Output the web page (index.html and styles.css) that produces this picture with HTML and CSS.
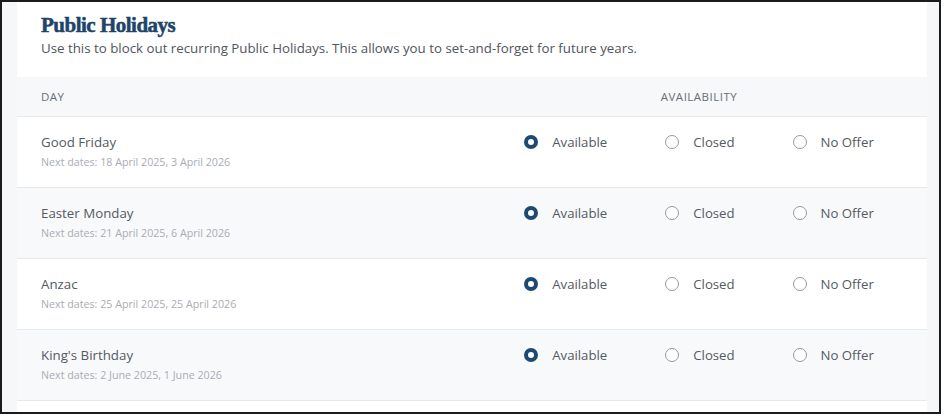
FILE: index.html
```html
<!DOCTYPE html>
<html lang="en">
<head>
<meta charset="utf-8">
<title>Public Holidays</title>
<link rel="stylesheet" href="styles.css">
</head>
<body>
<div class="frame">
  <section class="card">
    <header class="card-head">
      <h1 class="title">Public Holidays</h1>
      <p class="subtitle">Use this to block out recurring Public Holidays. This allows you to set-and-forget for future years.</p>
    </header>
    <div class="table">
      <div class="thead">
        <div class="th">Day</div>
        <div class="th th-avail">Availability</div>
      </div>

      <div class="row">
        <div class="day">
          <div class="day-name">Good Friday</div>
          <div class="day-dates">Next dates: 18 April 2025, 3 April 2026</div>
        </div>
        <div class="options">
          <label class="opt"><span class="radio checked"></span>Available</label>
          <label class="opt"><span class="radio"></span>Closed</label>
          <label class="opt"><span class="radio"></span>No Offer</label>
        </div>
      </div>

      <div class="row alt">
        <div class="day">
          <div class="day-name">Easter Monday</div>
          <div class="day-dates">Next dates: 21 April 2025, 6 April 2026</div>
        </div>
        <div class="options">
          <label class="opt"><span class="radio checked"></span>Available</label>
          <label class="opt"><span class="radio"></span>Closed</label>
          <label class="opt"><span class="radio"></span>No Offer</label>
        </div>
      </div>

      <div class="row">
        <div class="day">
          <div class="day-name">Anzac</div>
          <div class="day-dates">Next dates: 25 April 2025, 25 April 2026</div>
        </div>
        <div class="options">
          <label class="opt"><span class="radio checked"></span>Available</label>
          <label class="opt"><span class="radio"></span>Closed</label>
          <label class="opt"><span class="radio"></span>No Offer</label>
        </div>
      </div>

      <div class="row alt">
        <div class="day">
          <div class="day-name">King's Birthday</div>
          <div class="day-dates">Next dates: 2 June 2025, 1 June 2026</div>
        </div>
        <div class="options">
          <label class="opt"><span class="radio checked"></span>Available</label>
          <label class="opt"><span class="radio"></span>Closed</label>
          <label class="opt"><span class="radio"></span>No Offer</label>
        </div>
      </div>
    </div>
  </section>
</div>
</body>
</html>
```

FILE: styles.css
```css
* { box-sizing: border-box; }

html, body {
  margin: 0;
  padding: 0;
  background: #ffffff;
}

body {
  font-family: "Open Sans", "Liberation Sans", sans-serif;
  color: #555a61;
}

.frame {
  width: 941px;
  height: 414px;
  border: 2px solid #1b1b1b;
  background: #f6f7f9;
  padding: 0 12px 0 15px;
  overflow: hidden;
  display: flex;
}

.card {
  flex: 1;
  background: #ffffff;
  display: flex;
  flex-direction: column;
}

.card-head {
  padding: 11px 24px 0 24px;
}

.title {
  margin: 0;
  font-family: "Liberation Serif", "DejaVu Serif", serif;
  font-weight: 700;
  font-size: 21px;
  line-height: 24px;
  letter-spacing: -0.5px;
  color: #1d4469;
  -webkit-text-stroke: 0.5px #1d4469;
}

.subtitle {
  margin: 2px 0 0 0;
  font-size: 13.3px;
  line-height: 18px;
  color: #50555c;
}

.table {
  margin-top: 20px;
}

.thead {
  display: grid;
  grid-template-columns: 1fr 408px;
  align-items: center;
  height: 40px;
  padding: 0 24px;
  background: #f7f8fa;
  border-bottom: 1px solid #e7e9ec;
}

.th {
  font-size: 11.5px;
  letter-spacing: 0.5px;
  text-transform: uppercase;
  color: #6a6f76;
  line-height: 16px;
}

.th-avail {
  text-align: center;
}

.row {
  display: grid;
  grid-template-columns: 1fr 408px;
  align-items: start;
  padding: 15px 24px 18px 24px;
  border-bottom: 1px solid #e7e9ec;
  background: #ffffff;
}

.row.alt {
  background: #f8f9fb;
}

.day-name {
  font-size: 13.3px;
  line-height: 20px;
  color: #555a61;
}

.day-dates {
  margin-top: 3px;
  font-size: 10.7px;
  line-height: 14px;
  color: #a9adb3;
}

.options {
  display: flex;
  justify-content: center;
  align-items: center;
  gap: 58px;
  height: 20px;
}

.opt {
  display: flex;
  align-items: center;
  gap: 14px;
  font-size: 13.2px;
  line-height: 20px;
  color: #555a61;
}

.radio {
  width: 14px;
  height: 14px;
  border-radius: 50%;
  border: 1px solid #94989e;
  background: #ffffff;
  flex: none;
}

.radio.checked {
  border: 4.5px solid #1d4a72;
  background: #ffffff;
}
```
